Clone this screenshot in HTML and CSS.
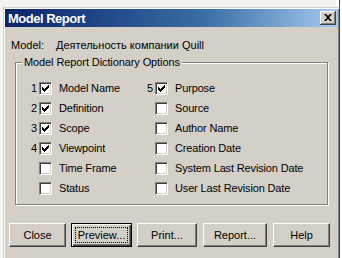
FILE: index.html
```html
<!DOCTYPE html>
<html>
	<head>
		<meta charset="utf-8" />
		<title>Model Report</title>
		<link rel="stylesheet" href="styles.css">
	</head>
	<body>
		<div class="desk">
			<div class="dialog">
				<div class="titlebar">
					<span class="title">Model Report</span>
					<span class="close"><svg width="8" height="7" viewBox="0 0 8 7"><path d="M0 0h2l2 2l2-2h2l-3 3.5l3 3.5h-2l-2-2l-2 2h-2l3-3.5z" fill="#000"/></svg></span>
				</div>
				<div class="content">
					<div class="model"><span class="lbl">Model:</span><span>Деятельность компании Quill</span></div>
					<fieldset class="group">
						<legend>Model Report Dictionary Options</legend>
						<div class="cols">
							<div class="col left">
								<div class="opt"><span class="num">1</span><span class="box on"></span><span class="txt">Model Name</span></div>
								<div class="opt"><span class="num">2</span><span class="box on"></span><span class="txt">Definition</span></div>
								<div class="opt"><span class="num">3</span><span class="box on"></span><span class="txt">Scope</span></div>
								<div class="opt"><span class="num">4</span><span class="box on"></span><span class="txt">Viewpoint</span></div>
								<div class="opt"><span class="num"></span><span class="box"></span><span class="txt">Time Frame</span></div>
								<div class="opt"><span class="num"></span><span class="box"></span><span class="txt">Status</span></div>
							</div>
							<div class="col right">
								<div class="opt"><span class="num">5</span><span class="box on"></span><span class="txt">Purpose</span></div>
								<div class="opt"><span class="num"></span><span class="box"></span><span class="txt">Source</span></div>
								<div class="opt"><span class="num"></span><span class="box"></span><span class="txt">Author Name</span></div>
								<div class="opt"><span class="num"></span><span class="box"></span><span class="txt">Creation Date</span></div>
								<div class="opt"><span class="num"></span><span class="box"></span><span class="txt">System Last Revision Date</span></div>
								<div class="opt"><span class="num"></span><span class="box"></span><span class="txt">User Last Revision Date</span></div>
							</div>
						</div>
					</fieldset>
					<div class="buttons">
						<div class="btn b-close">Close</div>
						<div class="btn b-preview"><span class="focus">Preview...</span></div>
						<div class="btn b-print">Print...</div>
						<div class="btn b-report">Report...</div>
						<div class="btn b-help">Help</div>
					</div>
				</div>
			</div>
		</div>
	</body>
</html>
```

FILE: styles.css
```css
*{margin:0;padding:0;box-sizing:border-box}
body{background:#f2f2ee;font-family:"Liberation Sans",Arial,sans-serif;font-size:11px;color:#000;width:342px;height:258px;overflow:hidden}
.desk{height:258px;padding:7px 0 0 3px;background:linear-gradient(to right,#f4f4f0 336px,#fff 336px,#fff 339px,#404040 339px,#404040 340px,#fff 340px)}
.dialog{width:337px;height:260px;background:#d4d0c8;padding:1px;
	border-top:1px solid #d4d0c8;border-left:1px solid #d4d0c8;border-right:1px solid #404040;
	box-shadow:inset 1px 1px 0 #fff,inset -1px 0 0 #808080}
.titlebar{height:18px;background:linear-gradient(to right,#0a246a,#3a6ea5 60%,#a6caf0);
	display:flex;align-items:center;justify-content:space-between;padding:0 2px 0 3px}
.title{color:#fff;font-weight:bold;font-size:13px;letter-spacing:-0.5px}
.close{width:16px;height:14px;background:#d4d0c8;display:flex;align-items:center;justify-content:center;
	border-right:1px solid #404040;border-bottom:1px solid #404040;
	box-shadow:inset 1px 1px 0 #fff,inset -1px -1px 0 #808080}
.model{margin-top:12px;height:12px;line-height:12px;padding-left:6px;display:flex}
.model .lbl{width:45px}
.group{margin:5px 10px 0 10px;border:1px solid #808080;box-shadow:1px 1px 0 #fff,inset 1px 1px 0 #fff;padding:0 0 6px 0}
.group legend{margin-left:6px;padding:0 2px;line-height:13px;background:#d4d0c8;letter-spacing:-0.1px}
.cols{display:flex;padding-top:9px}
.col.left{width:123px}
.opt{height:20px;display:flex;align-items:center}
.txt{margin-left:7px;letter-spacing:-0.15px}
.num{text-align:right}
.left .num{width:21px}
.right .num{width:14px}
.box{width:13px;height:13px;margin-left:2px;background:#fff;
	border-top:1px solid #808080;border-left:1px solid #808080;border-right:1px solid #fff;border-bottom:1px solid #fff;
	box-shadow:inset 1px 1px 0 #404040,inset -1px -1px 0 #d4d0c8;position:relative}
.box.on::after{content:"";position:absolute;left:2px;top:2px;width:7px;height:7px;
	background:url("data:image/svg+xml;utf8,<svg xmlns='http://www.w3.org/2000/svg' width='7' height='7'><path d='M0 2h1v1h1v1h1v-1h1v-1h1v-1h1v-1h1v3h-1v1h-1v1h-1v1h-1v1h-1v-1h-1v-1h-1v-1h-1z' fill='black'/></svg>") no-repeat}
.buttons{display:flex;margin:18px 0 0 4px}
.btn{height:24px;display:flex;align-items:center;justify-content:center;background:#d4d0c8;
	border-top:1px solid #fff;border-left:1px solid #fff;border-right:1px solid #404040;border-bottom:1px solid #404040;
	box-shadow:inset -1px -1px 0 #808080}
.b-close{width:57px}
.b-preview{width:61px;margin-left:5px;border:1px solid #000;box-shadow:inset 1px 1px 0 #fff,inset -1px -1px 0 #404040,inset -2px -2px 0 #808080}
.b-print{width:60px;margin-left:5px}
.b-report{width:64px;margin-left:6px}
.b-help{width:57px;margin-left:6px}
.focus{outline:1px dotted #000;outline-offset:1px;padding:0 1px}
```
